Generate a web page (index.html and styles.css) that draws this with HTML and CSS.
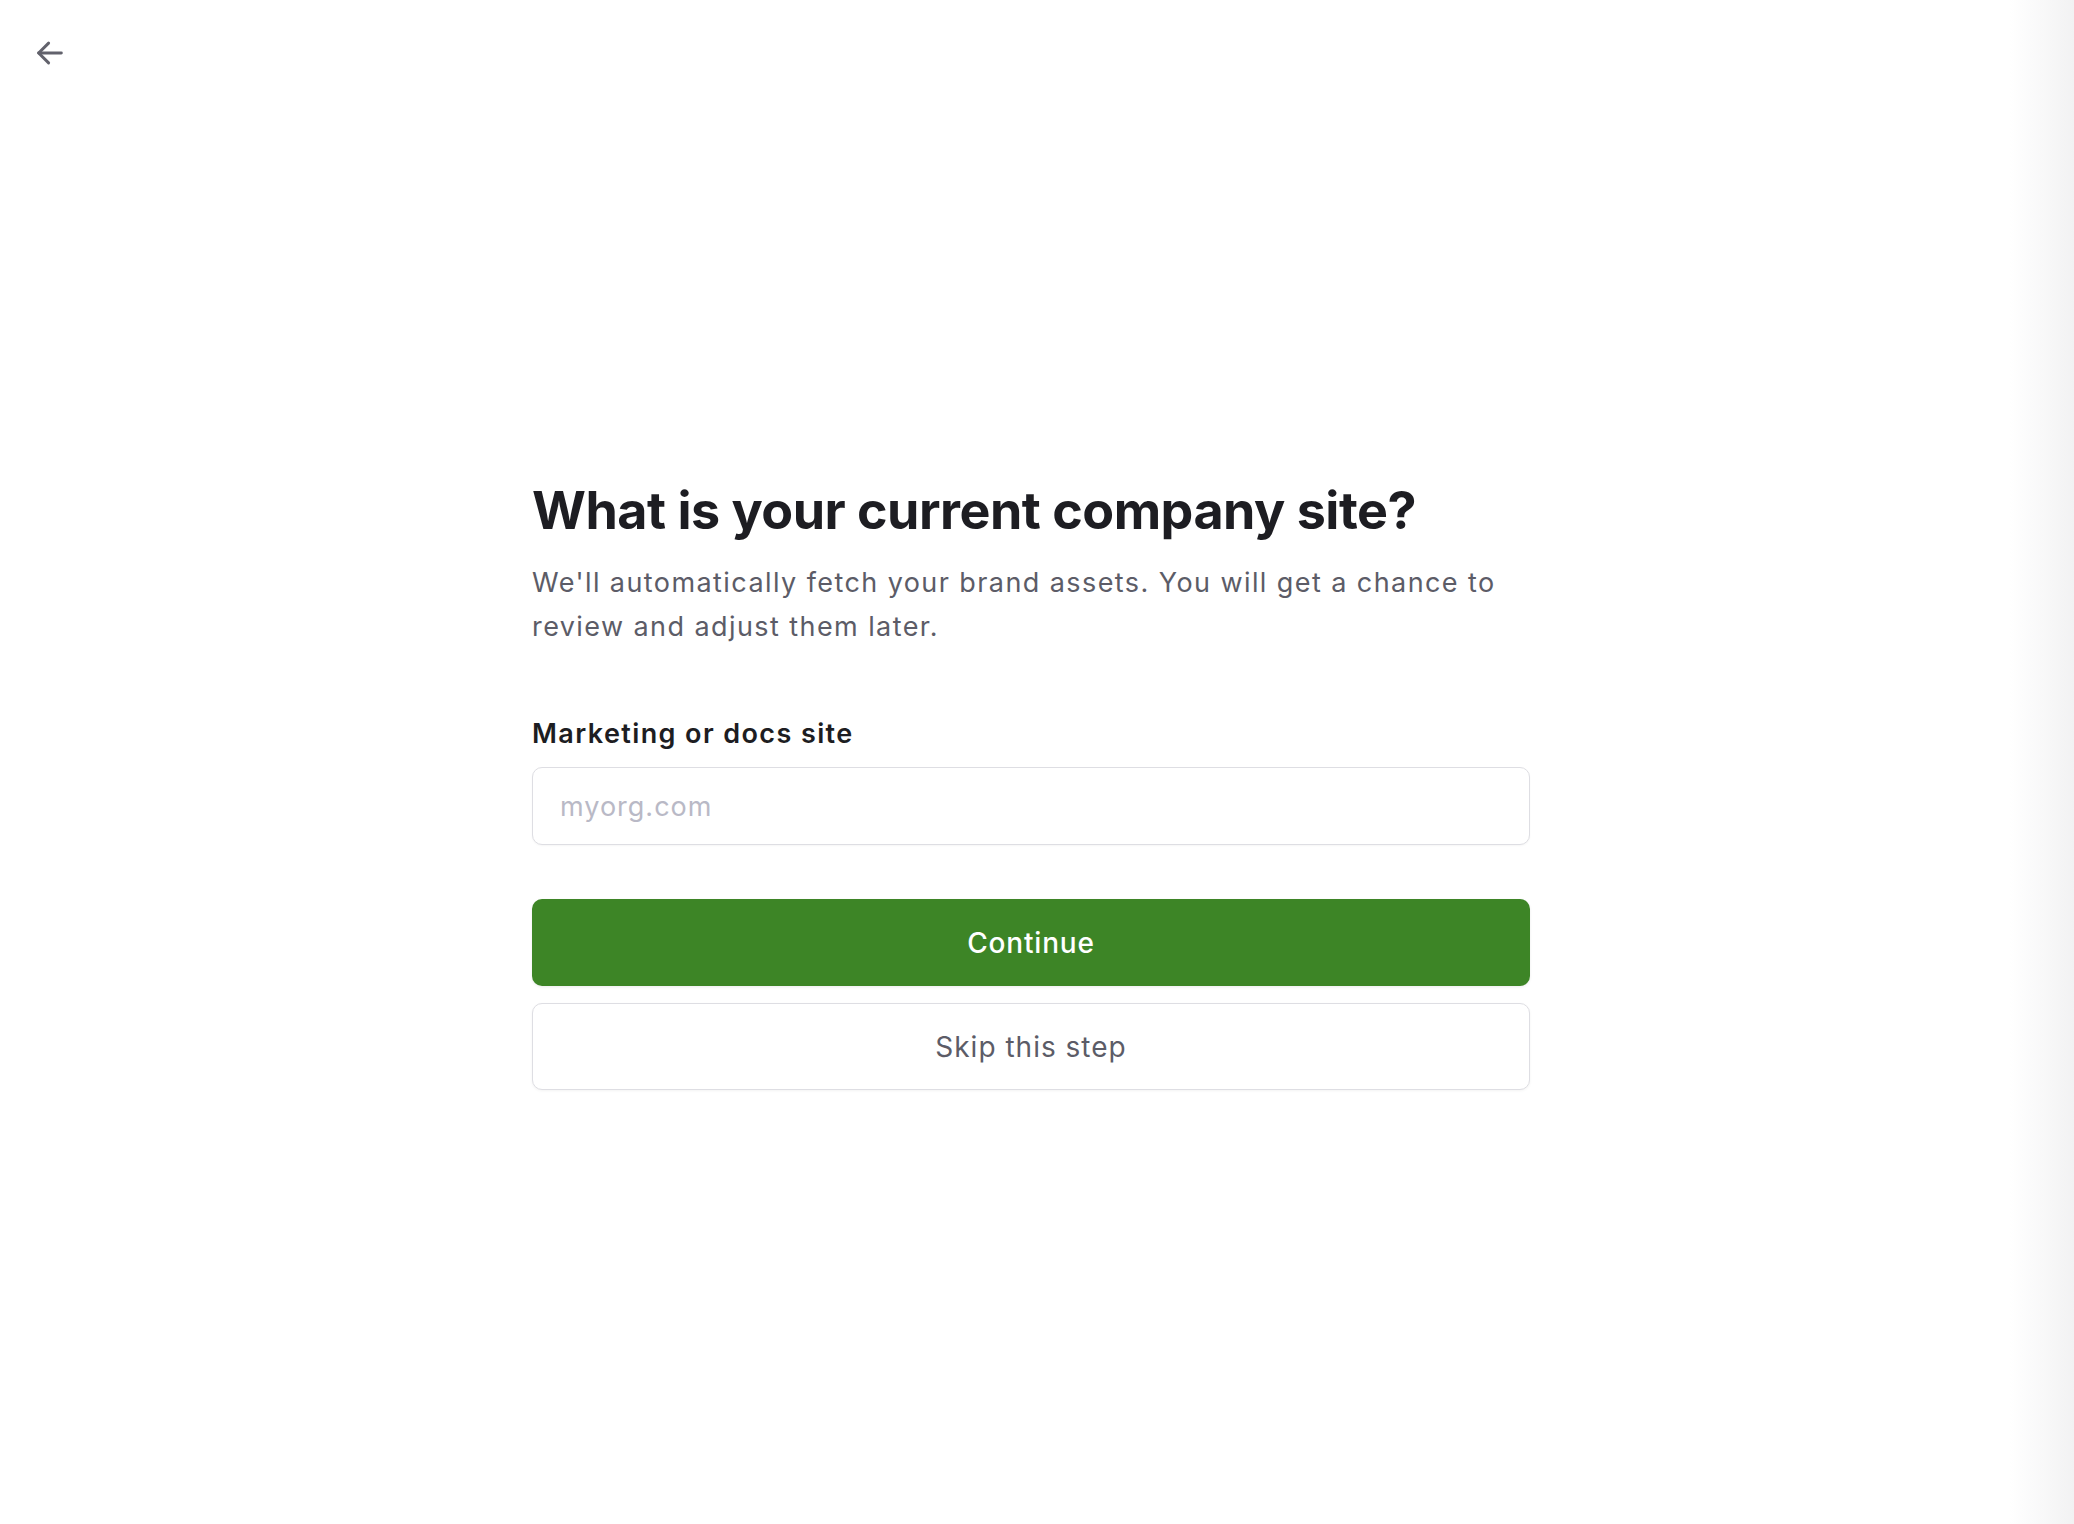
FILE: index.html
```html
<!DOCTYPE html>
<html lang="en">
  <head>
    <meta charset="UTF-8" />
    <meta name="viewport" content="width=device-width, initial-scale=1.0" />
    <title>Company site</title>
    <link rel="stylesheet" href="styles.css">
  </head>
  <body>
    <div class="page">
      <header class="topbar">
        <button class="back" aria-label="Back">
          <svg width="34" height="34" viewBox="0 0 24 24" fill="none" stroke="currentColor" stroke-width="2.1" stroke-linecap="round" stroke-linejoin="round">
            <path d="M20 12H4" />
            <path d="M11 5L4 12l7 7" />
          </svg>
        </button>
      </header>
      <main class="main">
        <div class="step">
          <h1 class="title">What is your current company site?</h1>
          <p class="lead">We'll automatically fetch your brand assets. You will get a chance to review and adjust them later.</p>
          <form class="form">
            <label class="label" for="site">Marketing or docs site</label>
            <input class="input" id="site" type="text" placeholder="myorg.com" />
            <div class="actions">
              <button type="button" class="btn btn-primary">Continue</button>
              <button type="button" class="btn btn-secondary">Skip this step</button>
            </div>
          </form>
        </div>
      </main>
    </div>
  </body>
</html>
```

FILE: styles.css
```css
html, body {
  margin: 0;
  height: 100%;
}
body {
  font-family: Inter, "Noto Sans", sans-serif;
  color: #1d1d22;
  background: linear-gradient(to right, #fff calc(100% - 64px), #f2f2f3);
}
.page {
  min-height: 100%;
}
.topbar {
  height: 106px;
  padding: 0 0 0 33px;
  display: flex;
  align-items: center;
}
.back {
  border: 0;
  background: none;
  padding: 0;
  width: 34px;
  height: 34px;
  display: flex;
  align-items: center;
  justify-content: center;
  color: #62626c;
  cursor: pointer;
}
.main {
  display: flex;
  justify-content: center;
  padding: 374px 12px 0 0;
}
.step {
  width: 998px;
}
.title {
  margin: 0;
  font-size: 52px;
  line-height: 62px;
  font-weight: 700;
  letter-spacing: -0.5px;
}
.lead {
  margin: 19px 0 0;
  font-size: 27px;
  line-height: 44px;
  letter-spacing: 1.42px;
  color: #5c5c67;
}
.form {
  margin-top: 68px;
  display: flex;
  flex-direction: column;
}
.label {
  font-size: 27px;
  line-height: 34px;
  font-weight: 600;
  letter-spacing: 1.4px;
  margin-bottom: 16px;
}
.input {
  box-sizing: border-box;
  height: 78px;
  padding: 0 27px;
  border: 1.5px solid #dedee3;
  border-radius: 10px;
  font-family: inherit;
  font-size: 27px;
  letter-spacing: 1px;
  color: #1d1d22;
  box-shadow: 0 1px 2px rgba(0, 0, 0, 0.04);
  outline: none;
}
.input::placeholder {
  color: #b9b9c6;
}
.actions {
  margin-top: 54px;
  display: flex;
  flex-direction: column;
  gap: 17px;
}
.btn {
  box-sizing: border-box;
  height: 87px;
  border-radius: 10px;
  font-family: inherit;
  font-size: 28px;
  letter-spacing: 0.8px;
  cursor: pointer;
}
.btn-primary {
  background: #3d8526;
  border: 0;
  color: #fff;
  font-weight: 500;
  box-shadow: 0 1px 3px rgba(0, 0, 0, 0.08);
}
.btn-secondary {
  background: #fff;
  border: 1.5px solid #dedee3;
  color: #5c5c67;
  font-weight: 400;
  letter-spacing: 1px;
  box-shadow: 0 1px 3px rgba(0, 0, 0, 0.05);
}
```
